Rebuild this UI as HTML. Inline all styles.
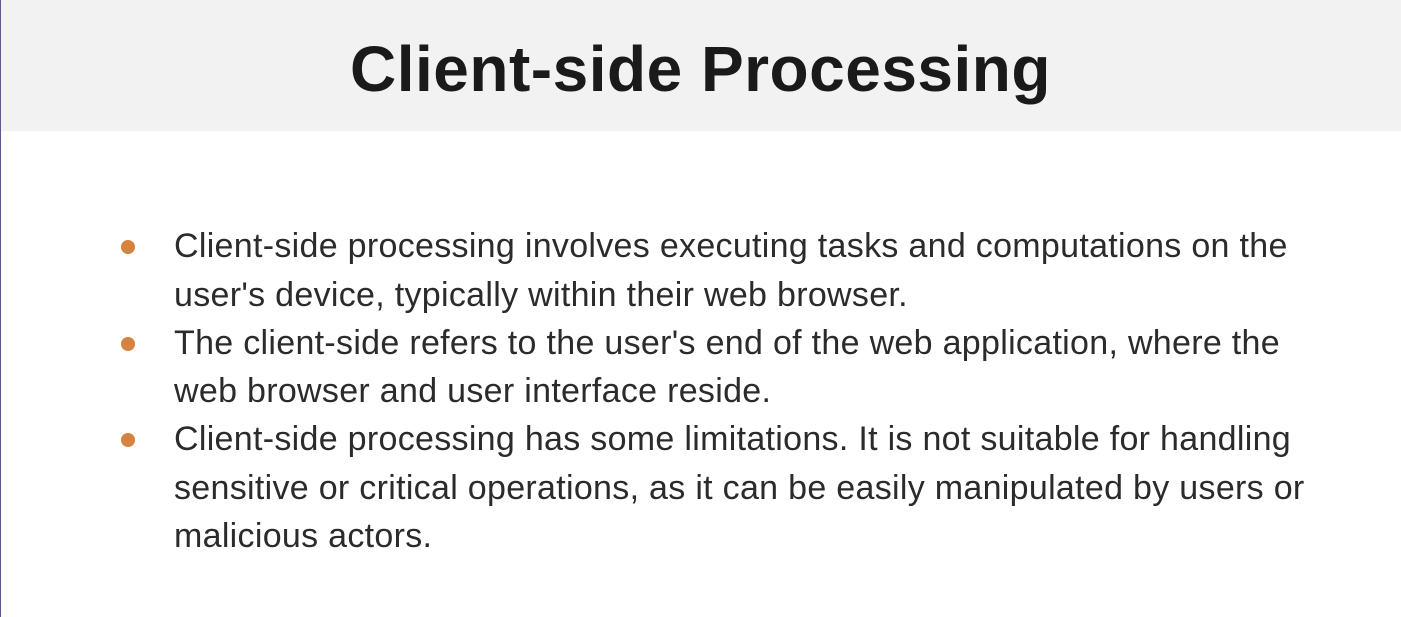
<!DOCTYPE html>
<html><head><meta charset="utf-8"><style>
html,body{margin:0;padding:0}
body{width:1401px;height:617px;position:relative;overflow:hidden;background:#fff;font-family:"Liberation Sans",sans-serif;color:#2a2a2a}
.lb{position:absolute;left:0;top:0;width:1px;height:617px;background:#5c5a8c}
.hdr{position:absolute;left:1px;top:0;width:1400px;height:131px;background:#f2f2f2}
h1{position:absolute;left:0;width:1401px;top:24px;margin:0;text-align:center;font-size:64px;font-weight:bold;color:#1a1a1a;line-height:90px;letter-spacing:0.5px}
.l{position:absolute;left:174px;font-size:34px;white-space:nowrap;line-height:40px;color:#2b2b2b;letter-spacing:0.3px}
.b{position:absolute;left:121px;width:14px;height:14px;border-radius:50%;background:#d4843e}
</style></head><body>
<div class="lb"></div><div class="hdr"></div>
<h1>Client-side Processing</h1>
<div class="b" style="top:240px"></div>
<div class="b" style="top:337px"></div>
<div class="b" style="top:433px"></div>
<div class="l" style="top:226px">Client-side processing involves executing tasks and computations on the</div>
<div class="l" style="top:275px">user's device, typically within their web browser.</div>
<div class="l" style="top:323px">The client-side refers to the user's end of the web application, where the</div>
<div class="l" style="top:371px">web browser and user interface reside.</div>
<div class="l" style="top:419px">Client-side processing has some limitations. It is not suitable for handling</div>
<div class="l" style="top:468px">sensitive or critical operations, as it can be easily manipulated by users or</div>
<div class="l" style="top:516px">malicious actors.</div>
</body></html>
